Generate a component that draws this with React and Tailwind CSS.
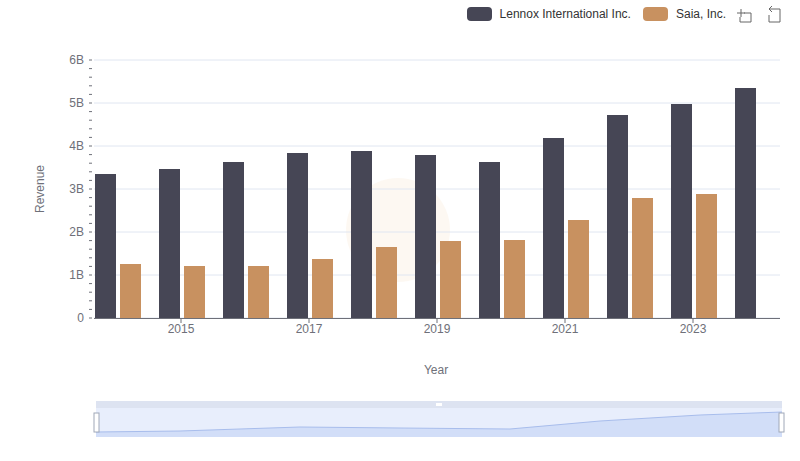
export default function App() {
  const dark = [174,169,162,153,151,155,162,138,115,104,88];
  const tan = [264,266,266,259,247,241,240,220,198,194,null];
  const f = { fontFamily: "'Liberation Sans', Arial, sans-serif" };
  const minor = [];
  for (let i = 0; i <= 30; i++) minor.push(318 - i * 8.6);
  return (
    <div className="relative w-[800px] h-[461px] bg-white" style={f}>
      <div className="flex items-center justify-end gap-2 pt-[5px] pr-[16px] text-[12px] text-[#333]">
        <div className="w-[25px] h-[14px] rounded-[4px] bg-[#464655]" />
        <span className="mr-[4px]">Lennox International Inc.</span>
        <div className="w-[25px] h-[14px] rounded-[4px] bg-[#c89160]" />
        <span>Saia, Inc.</span>
        <svg width="50" height="18" viewBox="0 0 50 18" fill="none" stroke="#666" strokeWidth="1">
          <path d="M3 8h8M7 4v8M10 8h7v9h-11v-5" />
          <path d="M35 4h11v13h-11v-7M35 4l3-3M35 4l3 3" />
        </svg>
      </div>
      <svg className="absolute left-0 top-0" width="800" height="461" style={f}>
        <circle cx="398" cy="230" r="52" fill="#fbf4ea" opacity="0.6" />
        {[0,1,2,3,4,5,6].map(i => (
          <g key={i}>
            <line x1="94" x2="780" y1={318 - i*43} y2={318 - i*43} stroke="#e0e6f1" />
            <text x="84" y={322 - i*43} textAnchor="end" fontSize="12" fill="#6e7079">{i === 0 ? "0" : i + "B"}</text>
          </g>
        ))}
        {minor.map((y, i) => <line key={i} x1="89" x2="92" y1={y} y2={y} stroke="#6e7079" />)}
        {dark.map((t, i) => {
          const c = 117 + i * 64;
          return (
            <g key={i}>
              <rect x={c-22} y={t} width="21" height={318-t} fill="#464655" />
              {tan[i] && <rect x={c+3} y={tan[i]} width="21" height={318-tan[i]} fill="#c89160" />}
            </g>
          );
        })}
        <line x1="94" x2="780" y1="318.5" y2="318.5" stroke="#6e7079" />
        {[2015,2017,2019,2021,2023].map((y, i) => (
          <g key={y}>
            <line x1={181 + i*128} x2={181 + i*128} y1="318" y2="323" stroke="#6e7079" />
            <text x={181 + i*128} y="333" textAnchor="middle" fontSize="12" fill="#6e7079">{y}</text>
          </g>
        ))}
        <text x="436" y="374" textAnchor="middle" fontSize="12" fill="#6e7079">Year</text>
        <text transform="translate(44 189) rotate(-90)" textAnchor="middle" fontSize="12" fill="#6e7079">Revenue</text>
        <rect x="96" y="401" width="686" height="36" fill="#e8eefc" />
        <rect x="96" y="401" width="686" height="7" fill="#dde3f1" />
        <path d="M96 432 L180 431 L300 427 L400 428 L510 429 L600 421 L700 415 L782 412 L782 437 L96 437Z" fill="#d2def8" />
        <path d="M96 432 L180 431 L300 427 L400 428 L510 429 L600 421 L700 415 L782 412" fill="none" stroke="#a8bdec" />
        <rect x="94" y="413" width="5" height="19" fill="#fff" stroke="#a0a8b8" />
        <rect x="779" y="413" width="5" height="19" fill="#fff" stroke="#a0a8b8" />
        <rect x="436" y="403" width="6" height="3" fill="#fff" />
      </svg>
    </div>
  );
}
